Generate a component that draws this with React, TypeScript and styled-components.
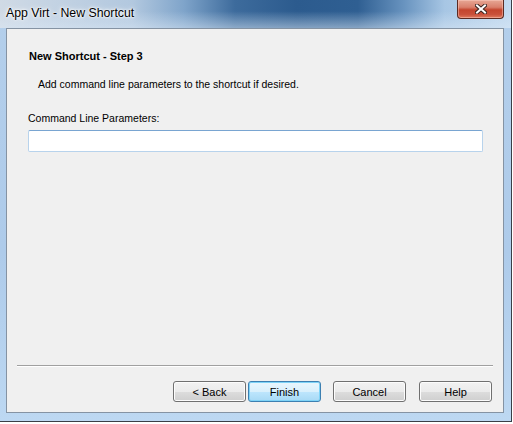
import React from "react";
import styled, { createGlobalStyle } from "styled-components";

const GlobalStyle = createGlobalStyle`
  html, body { margin: 0; padding: 0; background: #ffffff; }
  body {
    width: 513px;
    height: 424px;
    overflow: hidden;
    font-family: "Liberation Sans", Arial, sans-serif;
  }
`;

const Window = styled.div`
  width: 512px;
  height: 422px;
  box-sizing: border-box;
  border-right: 1px solid #3a3f47;
  border-bottom: 1px solid #3a3f47;
  display: flex;
  flex-direction: column;
  background: linear-gradient(180deg, #b4cfeb 0%, #aecbea 60%, #bdd8f2 100%);
`;

const TitleBar = styled.div`
  height: 28px;
  flex: none;
  display: flex;
  align-items: flex-start;
  justify-content: space-between;
  background:
    linear-gradient(180deg, rgba(255, 255, 255, 0) 40%, rgba(220, 233, 246, 0.5) 100%),
    linear-gradient(
      90deg,
      #d0dae5 0%,
      #c4d3e3 10%,
      #b2c8df 26%,
      #7fa4ca 36%,
      #3d6b9c 46%,
      #2c5b8e 58%,
      #2f5f92 70%,
      #6893bf 79%,
      #a7c6e4 87%,
      #c3daf0 100%
    );
`;

const Title = styled.span`
  font-family: "Liberation Sans", Arial, sans-serif;
  font-size: 12.3px;
  line-height: 14px;
  color: #000000;
  padding: 6px 0 0 6px;
  text-shadow: 0 0 6px #ffffff, 0 0 3px #ffffff, 0 0 2px #ffffff;
`;

const CloseButton = styled.div`
  width: 47px;
  height: 19px;
  margin-right: 7px;
  box-sizing: border-box;
  border: 1px solid #5b2a22;
  border-top: none;
  border-radius: 0 0 4px 4px;
  background: linear-gradient(
    180deg,
    #e7a795 0%,
    #d9806c 40%,
    #c4452e 55%,
    #c9503a 80%,
    #e07b5f 100%
  );
  box-shadow: inset 0 0 0 1px rgba(255, 210, 200, 0.45);
  display: flex;
  align-items: center;
  justify-content: center;
`;

const Panel = styled.div`
  flex: 1;
  margin: 0 7px 8px 6px;
  box-sizing: border-box;
  border: 1px solid #8593a3;
  background: #f0f0f0;
  display: flex;
  flex-direction: column;
  font-family: "Liberation Sans", Arial, sans-serif;
  font-size: 10.5px;
  color: #000000;
`;

const Heading = styled.div`
  font-weight: bold;
  font-size: 11px;
  line-height: 13px;
  margin: 21px 0 0 22px;
`;

const Description = styled.div`
  line-height: 13px;
  margin: 15px 0 0 31px;
`;

const FieldLabel = styled.label`
  line-height: 13px;
  margin: 21px 0 0 21px;
`;

const TextInput = styled.input`
  width: 455px;
  height: 22px;
  box-sizing: border-box;
  margin: 5px 0 0 21px;
  padding: 2px 4px;
  border: 1px solid #b8d3ec;
  border-top-color: #79a5d1;
  border-radius: 2px;
  background: #ffffff;
  font-family: "Liberation Sans", Arial, sans-serif;
  font-size: 11px;
  outline: none;
`;

const Spacer = styled.div`
  flex: 1;
`;

const Separator = styled.div`
  height: 1px;
  width: 476px;
  margin-left: 10px;
  background: #a0a0a0;
  border-bottom: 1px solid #ffffff;
`;

const ButtonRow = styled.div`
  display: flex;
  justify-content: flex-end;
  padding: 14px 11px 10px 0;
`;

const Button = styled.button<{ $gap: number; $default?: boolean }>`
  width: 73px;
  height: 21px;
  margin: 0 0 0 ${(p) => p.$gap}px;
  padding: 0;
  box-sizing: border-box;
  border: 1px solid ${(p) => (p.$default ? "#3c7fb1" : "#707070")};
  border-radius: 3px;
  font-family: "Liberation Sans", Arial, sans-serif;
  font-size: 11px;
  color: #000000;
  background: ${(p) =>
    p.$default
      ? "linear-gradient(180deg, #eaf6fd 0%, #d9f0fc 50%, #bee6fd 51%, #a7d9f5 100%)"
      : "linear-gradient(180deg, #f2f2f2 0%, #ebebeb 50%, #dddddd 51%, #cfcfcf 100%)"};
  box-shadow: inset 0 0 0 1px ${(p) => (p.$default ? "#7ed3f7" : "#fcfcfc")};
`;

export default function App() {
  return (
    <>
      <GlobalStyle />
      <Window>
        <TitleBar>
          <Title>App Virt - New Shortcut</Title>
          <CloseButton>
            <svg width="12" height="10" viewBox="0 0 12 10">
              <path d="M2 1.5 L10 8.5 M10 1.5 L2 8.5" stroke="#3a2420" strokeWidth="4" strokeLinecap="square" />
              <path d="M2 1.5 L10 8.5 M10 1.5 L2 8.5" stroke="#ffffff" strokeWidth="2" strokeLinecap="square" />
            </svg>
          </CloseButton>
        </TitleBar>
        <Panel>
          <Heading>New Shortcut - Step 3</Heading>
          <Description>Add command line parameters to the shortcut if desired.</Description>
          <FieldLabel>Command Line Parameters:</FieldLabel>
          <TextInput type="text" />
          <Spacer />
          <Separator />
          <ButtonRow>
            <Button $gap={0}>&lt; Back</Button>
            <Button $gap={2} $default>
              Finish
            </Button>
            <Button $gap={12}>Cancel</Button>
            <Button $gap={13}>Help</Button>
          </ButtonRow>
        </Panel>
      </Window>
    </>
  );
}
